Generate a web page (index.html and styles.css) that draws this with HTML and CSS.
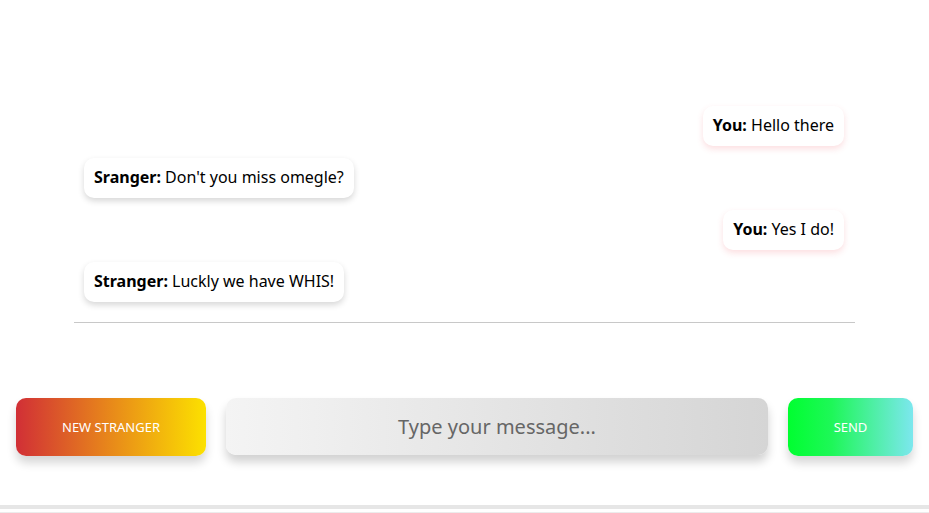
FILE: index.html
```html
<!DOCTYPE html>
<html lang="en">
<head>
    <meta charset="UTF-8">
    <meta name="viewport" content="width=device-width, initial-scale=1.0">
    <title>WHIS</title>
    <link rel="stylesheet" href="styles.css">
</head>
<body>
    <div class="chat">
        <div class="messages">
            <div class="msg you"><b>You:</b> Hello there</div>
            <div class="msg stranger"><b>Sranger:</b> Don't you miss omegle?</div>
            <div class="msg you"><b>You:</b> Yes I do!</div>
            <div class="msg stranger"><b>Stranger:</b> Luckly we have WHIS!</div>
        </div>
    </div>

    <div class="controls">
        <button class="btn new-btn">New Stranger</button>
        <input type="text" class="message-input" placeholder="Type your message...">
        <button class="btn send-btn">Send</button>
    </div>

    <div class="footer-bar"></div>
</body>
</html>
```

FILE: styles.css
```css
* {
    margin: 0;
    padding: 0;
    box-sizing: border-box;
    font-family: "Noto Sans", "Open Sans", sans-serif;
}

body {
    background: #fff;
    color: #000;
    height: 513px;
    display: flex;
    flex-direction: column;
}

.chat {
    max-width: 781px;
    width: 100%;
    margin: 0 auto;
    padding-top: 106px;
    border-bottom: 1px solid #c8c8c8;
}

.messages {
    display: flex;
    flex-direction: column;
    gap: 12px;
    padding: 0 11px 20px 10px;
}

.msg {
    font-size: 16px;
    line-height: 22px;
    padding: 8px 10px 10px;
    border-radius: 10px;
    background: #fff;
    width: fit-content;
}

.msg b {
    font-weight: 700;
}

.you {
    align-self: flex-end;
    box-shadow: 0 3px 6px rgba(240, 80, 90, 0.18);
}

.stranger {
    align-self: flex-start;
    box-shadow: 0 3px 6px rgba(0, 0, 0, 0.16);
}

.controls {
    display: flex;
    gap: 20px;
    padding: 75px 16px 0;
    height: 133px;
}

.btn {
    height: 58px;
    border: none;
    border-radius: 10px;
    color: #fff;
    font-size: 13px;
    text-transform: uppercase;
    box-shadow: 0 7px 10px rgba(0, 0, 0, 0.16);
    cursor: pointer;
}

.new-btn {
    width: 190px;
    background: linear-gradient(to right, #d12f36, #e8891a 50%, #fce100);
}

.send-btn {
    width: 125px;
    background: linear-gradient(to right, #00ff30, #1ef758 35%, #7ce7ee);
}

.message-input {
    flex: 1;
    height: 57px;
    border: none;
    border-radius: 10px;
    background: linear-gradient(to right, #f4f4f4, #d5d5d5);
    font-size: 20px;
    text-align: center;
    color: #555;
    box-shadow: 0 7px 10px rgba(0, 0, 0, 0.18);
    outline: none;
}

.message-input::placeholder {
    color: #666;
}

.footer-bar {
    height: 8px;
    margin-top: auto;
    border-top: 4px solid #e6e6e6;
    border-bottom: 1px solid #ececec;
    background: #fff;
}
```
